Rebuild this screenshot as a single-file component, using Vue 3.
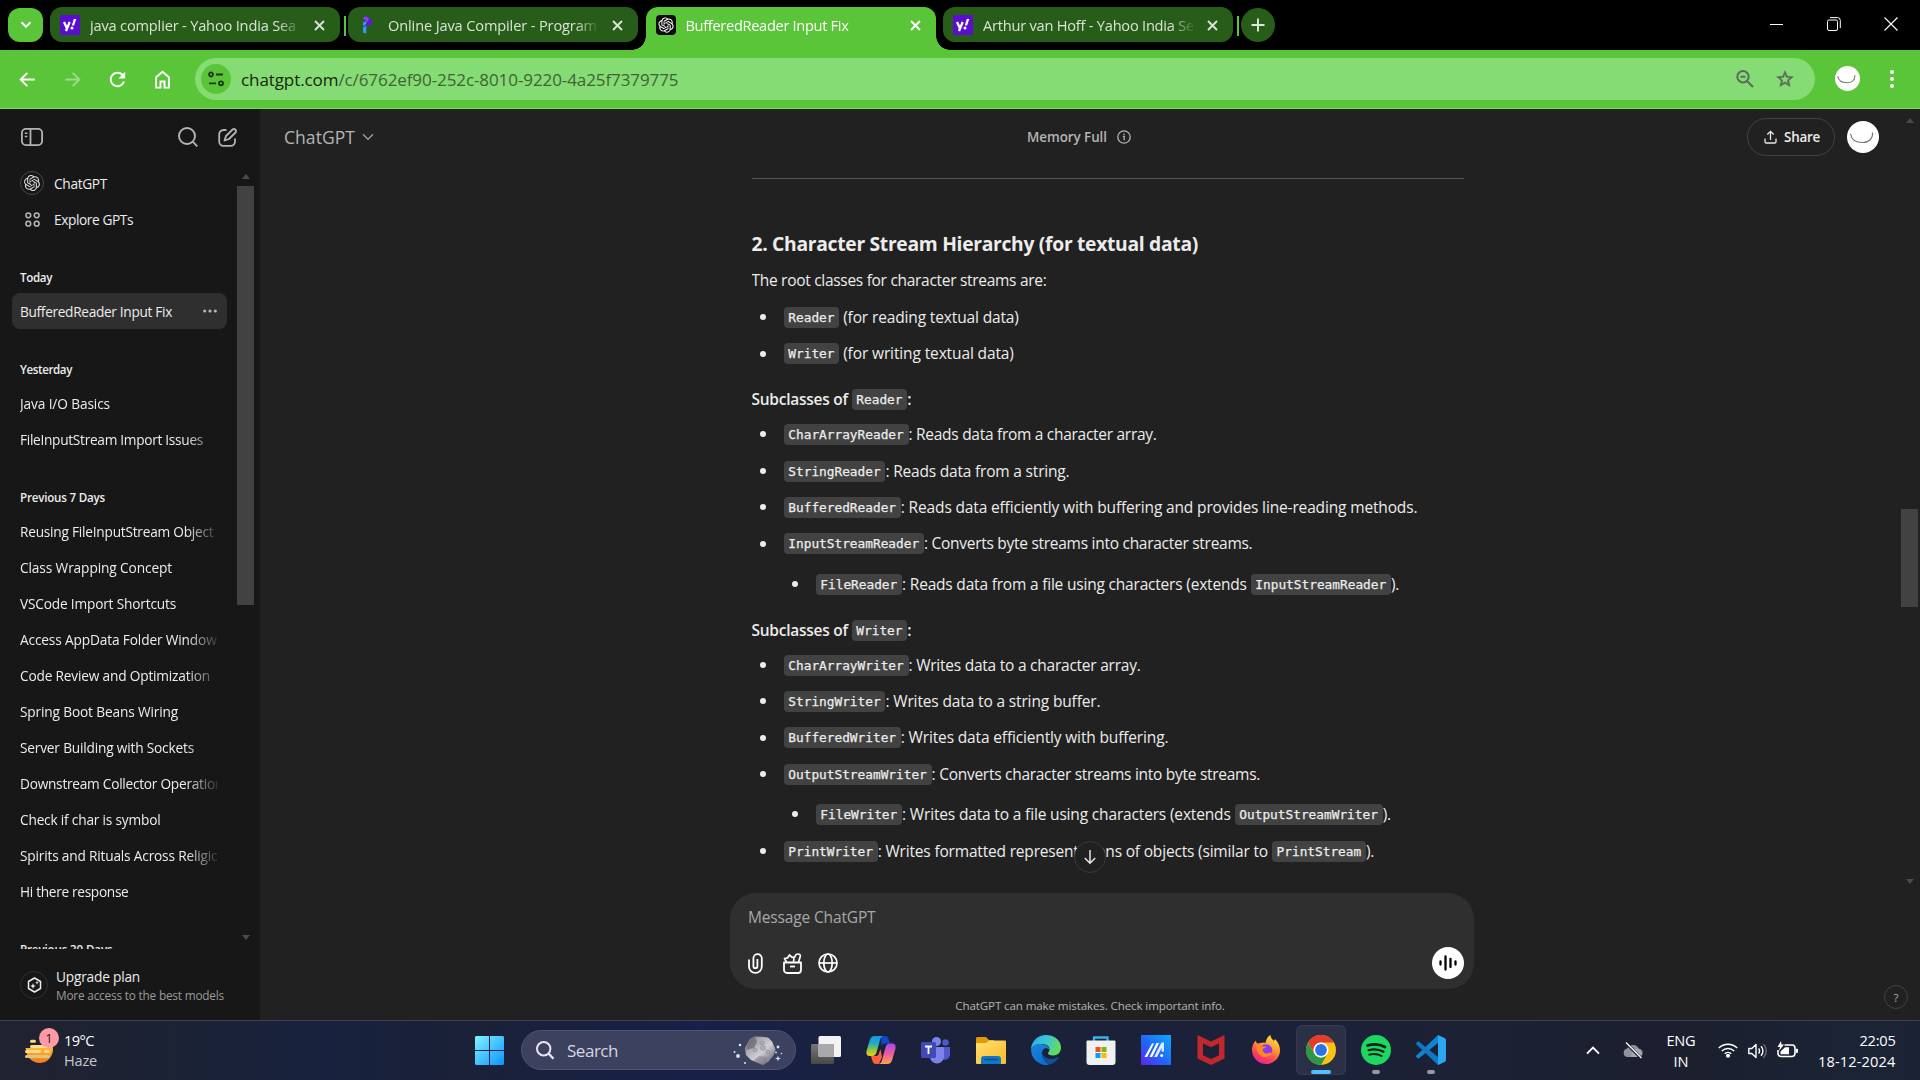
<script setup>
const logo =
  'M22.2819 9.8211a5.9847 5.9847 0 0 0-.5157-4.9108 6.0462 6.0462 0 0 0-6.5098-2.9A6.0651 6.0651 0 0 0 4.9807 4.1818a5.9847 5.9847 0 0 0-3.9977 2.9 6.0462 6.0462 0 0 0 .7427 7.0966 5.98 5.98 0 0 0 .511 4.9107 6.051 6.051 0 0 0 6.5146 2.9001A5.9847 5.9847 0 0 0 13.2599 24a6.0557 6.0557 0 0 0 5.7718-4.2058 5.9894 5.9894 0 0 0 3.9977-2.9001 6.0557 6.0557 0 0 0-.7475-7.0729zm-9.022 12.6081a4.4755 4.4755 0 0 1-2.8764-1.0408l.1419-.0804 4.7783-2.7582a.7948.7948 0 0 0 .3927-.6813v-6.7369l2.02 1.1686a.071.071 0 0 1 .038.052v5.5826a4.504 4.504 0 0 1-4.4945 4.4944zm-9.6607-4.1254a4.4708 4.4708 0 0 1-.5346-3.0137l.142.0852 4.783 2.7582a.7712.7712 0 0 0 .7806 0l5.8428-3.3685v2.3324a.0804.0804 0 0 1-.0332.0615L9.74 19.9502a4.4992 4.4992 0 0 1-6.1408-1.6464zM2.3408 7.8956a4.485 4.485 0 0 1 2.3655-1.9728V11.6a.7664.7664 0 0 0 .3879.6765l5.8144 3.3543-2.0201 1.1685a.0757.0757 0 0 1-.071 0l-4.8303-2.7865A4.504 4.504 0 0 1 2.3408 7.872zm16.5963 3.8558L13.1038 8.364 15.1192 7.2a.0757.0757 0 0 1 .071 0l4.8303 2.7913a4.4944 4.4944 0 0 1-.6765 8.1042v-5.6772a.79.79 0 0 0-.407-.667zm2.0107-3.0231l-.142-.0852-4.7735-2.7818a.7759.7759 0 0 0-.7854 0L9.409 9.2297V6.8974a.0662.0662 0 0 1 .0284-.0615l4.8303-2.7866a4.4992 4.4992 0 0 1 6.6802 4.66zM8.3065 12.863l-2.02-1.1638a.0804.0804 0 0 1-.038-.0567V6.0742a4.4992 4.4992 0 0 1 7.3757-3.4537l-.142.0805L8.704 5.459a.7948.7948 0 0 0-.3927.6813zm1.0976-2.3654l2.602-1.4998 2.6069 1.4998v2.9994l-2.5974 1.4997-2.6067-1.4997Z'

// Tracks the letters of a label so that it fills the given width in pixels.
const vFit = {
  mounted(el, { value }) {
    if (!value) return
    const natural = el.getBoundingClientRect().width
    el.style.letterSpacing = (value - natural) / el.textContent.length + 'px'
  },
}

const tabs = [
  { icon: 'yahoo', title: 'java complier - Yahoo India Sea', w: 206 },
  { icon: 'programiz', title: 'Online Java Compiler - Program', w: 209 },
  { icon: 'gpt', title: 'BufferedReader Input Fix', w: 163, active: true },
  { icon: 'yahoo', title: 'Arthur van Hoff - Yahoo India Se', w: 211 },
]

const groups = [
  { label: 'Today', w: 32, chats: [{ t: 'BufferedReader Input Fix', w: 152, active: true }] },
  {
    label: 'Yesterday',
    w: 52,
    chats: [
      { t: 'Java I/O Basics', w: 90 },
      { t: 'FileInputStream Import Issues', w: 183 },
    ],
  },
  {
    label: 'Previous 7 Days',
    w: 85,
    chats: [
      { t: 'Reusing FileInputStream Object', w: 193.5 },
      { t: 'Class Wrapping Concept', w: 152 },
      { t: 'VSCode Import Shortcuts', w: 156 },
      { t: 'Access AppData Folder Windows', w: 203 },
      { t: 'Code Review and Optimization', w: 190 },
      { t: 'Spring Boot Beans Wiring', w: 158 },
      { t: 'Server Building with Sockets', w: 174 },
      { t: 'Downstream Collector Operation', w: 203 },
      { t: 'Check if char is symbol', w: 140.5 },
      { t: 'Spirits and Rituals Across Religio', w: 199 },
      { t: 'Hi there response', w: 108.5 },
    ],
  },
  { label: 'Previous 30 Days', w: 92.5, chats: [] },
]

const sections = [
  {
    items: [
      { code: 'Reader', text: ' (for reading textual data)', w: 179.5 },
      { code: 'Writer', text: ' (for writing textual data)', w: 174.5 },
    ],
  },
  {
    of: 'Reader',
    items: [
      { code: 'CharArrayReader', text: ': Reads data from a character array.', w: 248 },
      { code: 'StringReader', text: ': Reads data from a string.', w: 184 },
      { code: 'BufferedReader', text: ': Reads data efficiently with buffering and provides line-reading methods.', w: 516.5 },
      { code: 'InputStreamReader', text: ': Converts byte streams into character streams.', w: 328.5 },
      { nested: true, code: 'FileReader', text: ': Reads data from a file using characters (extends ', w: 348.5, code2: 'InputStreamReader' },
    ],
  },
  {
    of: 'Writer',
    items: [
      { code: 'CharArrayWriter', text: ': Writes data to a character array.', w: 232 },
      { code: 'StringWriter', text: ': Writes data to a string buffer.', w: 215 },
      { code: 'BufferedWriter', text: ': Writes data efficiently with buffering.', w: 267.5 },
      { code: 'OutputStreamWriter', text: ': Converts character streams into byte streams.', w: 328.5 },
      { nested: true, code: 'FileWriter', text: ': Writes data to a file using characters (extends ', w: 332.5, code2: 'OutputStreamWriter' },
      { code: 'PrintWriter', text: ': Writes formatted representations of objects (similar to ', w: 394, code2: 'PrintStream' },
    ],
  },
]
</script>

<template>
  <div class="screen">
    <!-- Tab strip -->
    <div class="tabstrip">
      <button class="tab-search">
        <svg width="12" height="8" viewBox="0 0 12 8"><path d="M1.5 1.3 6 5.8l4.5-4.5" fill="none" stroke="#fff" stroke-width="2" /></svg>
      </button>
      <template v-for="(tab, i) in tabs" :key="i">
        <div class="tab" :class="{ active: tab.active }">
          <svg v-if="tab.icon === 'yahoo'" width="20" height="20" viewBox="0 0 20 20">
            <rect width="20" height="20" fill="#5b0fce" />
            <path d="M4 7l2.8 6M9.7 7 6 16" stroke="#fff" stroke-width="2.3" fill="none" />
            <path d="M16.3 4h-2.5l-2 6.600h2.300z" fill="#fff" /><circle cx="12" cy="13" r="1.500" fill="#fff" />
          </svg>
          <svg v-else-if="tab.icon === 'programiz'" width="20" height="20" viewBox="0 0 20 20">
            <path d="M5 4c0-2 2-3 4-2l4 2.500c2 1.500 2 4 0 5L7.500 13l-1-3 3.500-2.500z" fill="#5a1ad8" />
            <path d="M5 3.800c0-2 2-3 4-2l2 1.200-1 4z" fill="#8a3cf0" />
            <path d="M5 7.500 8.300 6v3L5 11zM5 12.500l3.300-2V18c-2 .8-3.300.3-3.300-1.500z" fill="#2f9cf4" />
          </svg>
          <svg v-else width="20" height="20" viewBox="0 0 20 20">
            <rect width="20" height="20" rx="4" fill="#0c0c0c" />
            <path :d="logo" fill="#fff" transform="translate(2.4 2.4) scale(.635)" />
          </svg>
          <div class="tab-title"><span v-fit="tab.w">{{ tab.title }}</span></div>
          <svg class="tab-close" width="11" height="11" viewBox="0 0 11 11"><path d="M1 1l9 9M10 1l-9 9" stroke="currentColor" stroke-width="1.900" /></svg>
        </div>
        <i v-if="i === 0 || i === 3" class="tab-sep" />
      </template>
      <button class="new-tab">
        <svg width="14" height="14" viewBox="0 0 14 14"><path d="M7 .5v13M.5 7h13" stroke="#dfe8dc" stroke-width="1.900" /></svg>
      </button>
      <div class="window-controls">
        <svg width="13" height="14" viewBox="0 0 13 14"><path d="M0 7.500h13" stroke="#fff" /></svg>
        <svg width="14" height="14" viewBox="0 0 14 14" fill="none" stroke="#fff"><rect x=".5" y="3" width="10" height="10.500" rx="1.500" /><path d="M3 .6h7.500a2.800 2.800 0 0 1 2.800 2.800V11" /></svg>
        <svg width="14" height="14" viewBox="0 0 14 14"><path d="M.5.500l13 13M13.500.500l-13 13" stroke="#fff" stroke-width="1.100" /></svg>
      </div>
    </div>

    <!-- Toolbar -->
    <div class="toolbar">
      <div class="nav">
        <svg viewBox="0 0 24 24"><path d="M19.500 11H7.300l5.200-5.200L11.100 4.400 3.500 12l7.600 7.600 1.400-1.400L7.300 13h12.200z" fill="#fff" /></svg>
        <svg viewBox="0 0 24 24" class="dim"><path d="M4.500 11h12.200l-5.200-5.200 1.400-1.400 7.600 7.600-7.600 7.600-1.400-1.400 5.200-5.200H4.500z" fill="#fff" /></svg>
        <svg viewBox="0 0 24 24"><path d="M17.650 6.350C16.200 4.900 14.210 4 12 4c-4.420 0-7.990 3.580-7.990 8s3.570 8 7.990 8c3.730 0 6.840-2.550 7.730-6h-2.080c-.82 2.330-3.040 4-5.650 4-3.310 0-6-2.690-6-6s2.690-6 6-6c1.660 0 3.140.690 4.220 1.780L13 11h7V4z" fill="#fff" /></svg>
        <svg viewBox="0 0 24 24"><path d="M5.300 20.500V9.700L12 4l6.700 5.700v10.800h-4.600v-6.500H9.900v6.500z" fill="none" stroke="#fff" stroke-width="2" /></svg>
      </div>
      <div class="omnibox">
        <div class="site-info">
          <svg width="16" height="16" viewBox="0 0 16 16" fill="none" stroke="#20351b" stroke-width="1.800"><circle cx="3" cy="3.500" r="2" /><path d="M8 3.500h7M1 12.300h7" /><circle cx="13" cy="12.300" r="2" /></svg>
        </div>
        <span v-fit="437.5" class="url"><b>chatgpt.com</b>/c/6762ef90-252c-8010-9220-4a25f7379775</span>
        <svg class="zoom" width="18" height="18" viewBox="0 0 18 18" fill="none" stroke="#5c6b58" stroke-width="2"><circle cx="7" cy="6.800" r="5.700" /><path d="M11 11l6 6M4.500 6.800h5" /></svg>
        <svg class="star" width="20" height="20" viewBox="0 0 24 24"><path d="M22 9.240l-7.190-.62L12 2 9.190 8.630 2 9.240l5.460 4.730L5.820 21 12 17.270 18.180 21l-1.630-7.030zM12 15.400l-3.760 2.270 1-4.280-3.320-2.880 4.380-.38L12 6.100l1.710 4.040 4.380.38-3.320 2.880 1 4.280z" fill="#5c6b58" stroke="#5c6b58" stroke-width=".6" /></svg>
      </div>
      <svg class="profile" width="25" height="25" viewBox="0 0 32 32"><circle cx="16" cy="16" r="16" fill="#fff" /><path d="M3.500 13c1 6 6 8.500 12 8.500S26 18 25.500 11.500" fill="none" stroke="#777" stroke-width="1.300" /></svg>
      <svg class="menu" width="4" height="18" viewBox="0 0 4 18" fill="#fff"><circle cx="2" cy="2" r="2" /><circle cx="2" cy="9" r="2" /><circle cx="2" cy="16" r="2" /></svg>
    </div>

    <div class="page">
      <!-- Sidebar -->
      <aside class="sidebar">
        <div class="side-top">
          <svg width="22" height="18" viewBox="0 0 22 18" fill="none" stroke="#b4b4b4" stroke-width="1.800"><rect x=".9" y=".9" width="20.200" height="16.200" rx="4" /><path d="M9.500 1v16" /><path d="M3.800 5.300h2.600M3.800 8.500h2.600" stroke-width="1.600" /></svg>
          <svg class="find" width="20" height="20" viewBox="0 0 20 20" fill="none" stroke="#b4b4b4" stroke-width="1.900"><circle cx="9" cy="9" r="8" /><path d="M14.700 14.700l4.600 4.600" /></svg>
          <svg width="19" height="19" viewBox="0 0 19 19" fill="none" stroke="#b4b4b4" stroke-width="1.800"><path d="M8.500 2H5.500A4.300 4.300 0 0 0 1.200 6.300V13.500A4.300 4.300 0 0 0 5.500 17.800H12.700A4.300 4.300 0 0 0 17 13.500V10.500" /><path d="M14.600 1.500a2.100 2.100 0 0 1 2.900 3L11 11l-4.500 1.500L8 8z" stroke-linejoin="round" /></svg>
        </div>
        <div class="side-body">
          <div class="side-list">
            <div class="gpt-row">
              <span class="round"><svg width="16" height="16" viewBox="0 0 24 24"><path :d="logo" fill="#ddd" /></svg></span>
              <span v-fit="53">ChatGPT</span>
            </div>
            <div class="gpt-row">
              <span class="grid4"><svg width="15" height="15" viewBox="0 0 15 15" fill="none" stroke="#b4b4b4" stroke-width="1.500"><circle cx="3.300" cy="3.300" r="2.400" /><circle cx="11.700" cy="3.300" r="2.400" /><circle cx="3.300" cy="11.700" r="2.400" /><circle cx="11.700" cy="11.700" r="2.400" /></svg></span>
              <span v-fit="79">Explore GPTs</span>
            </div>
            <section v-for="g in groups" :key="g.label" class="group">
              <h4><span v-fit="g.w">{{ g.label }}</span></h4>
              <div v-for="c in g.chats" :key="c.t" class="chat" :class="{ active: c.active }">
                <div class="chat-title"><span v-fit="c.w">{{ c.t }}</span></div>
                <svg v-if="c.active" class="dots" width="14" height="4" viewBox="0 0 14 4" fill="#b4b4b4"><circle cx="1.700" cy="2" r="1.600" /><circle cx="7" cy="2" r="1.600" /><circle cx="12.300" cy="2" r="1.600" /></svg>
              </div>
            </section>
          </div>
          <div class="scrollbar side-scroll">
            <i class="up" /><i class="thumb" /><i class="down" />
          </div>
        </div>
        <div class="upgrade">
          <span class="round big">
            <svg width="15" height="16" viewBox="0 0 15 16"><path d="M7.500 1 13.500 4.500v7L7.500 15l-6-3.500v-7z" fill="none" stroke="#eee" stroke-width="1.500" stroke-linejoin="round" /><path d="M6 6l.8 2.200L9 9l-2.200.8L6 12l-.8-2.200L3 9l2.200-.8zM10 3.800l.5 1.500 1.500.5-1.500.5-.5 1.500-.5-1.500L8 5.800l1.500-.5z" fill="#eee" /></svg>
          </span>
          <div class="upgrade-text"><span v-fit="84">Upgrade plan</span><small><span v-fit="168">More access to the best models</span></small></div>
        </div>
      </aside>

      <!-- Conversation -->
      <main class="main">
        <header class="head">
          <div class="model"><span v-fit="71">ChatGPT</span><svg width="12" height="8" viewBox="0 0 12 8"><path d="M1 1.300l5 5 5-5" fill="none" stroke="#9b9b9b" stroke-width="1.400" /></svg></div>
          <div class="memory"><span v-fit="80">Memory Full</span><svg width="14" height="14" viewBox="0 0 14 14" fill="none" stroke="#b4b4b4" stroke-width="1.300"><circle cx="7" cy="7" r="6.200" /><path d="M5.800 6.300h1.400v4M7 3.500v1.400" /></svg></div>
          <div class="share"><svg width="13" height="14" viewBox="0 0 13 14" fill="none" stroke="#e8e8e8" stroke-width="1.300"><path d="M6.500 10V1.500M3.300 4.500l3.200-3.200 3.200 3.200M1 8.500v3.200a1.300 1.300 0 0 0 1.300 1.300h8.400a1.300 1.300 0 0 0 1.300-1.300V8.500" /></svg><span v-fit="36">Share</span></div>
          <svg class="avatar" width="32" height="32" viewBox="0 0 32 32"><circle cx="16" cy="16" r="16" fill="#fff" /><path d="M3.500 13c1 6 6 8.500 12 8.500S26 18 25.500 11.500" fill="none" stroke="#777" stroke-width="1.200" /></svg>
        </header>
        <article class="article">
          <hr />
          <h3><span v-fit="446.5">2. Character Stream Hierarchy (for textual data)</span></h3>
          <p><span v-fit="295">The root classes for character streams are:</span></p>
          <template v-for="(s, i) in sections" :key="i">
            <div v-if="s.of" class="sub"><span v-fit="100">Subclasses of </span><code>{{ s.of }}</code><span>:</span></div>
            <ul>
              <li v-for="it in s.items" :key="it.code" :class="{ nested: it.nested }">
                <i class="bullet" /><code>{{ it.code }}</code><span v-fit="it.w">{{ it.text }}</span>
                <template v-if="it.code2"><code>{{ it.code2 }}</code><span v-fit="8">).</span></template>
              </li>
            </ul>
          </template>
        </article>
        <div class="composer">
          <button class="to-bottom"><svg width="14" height="16" viewBox="0 0 14 16"><path d="M7 1v13M1.800 9 7 14.200 12.200 9" fill="none" stroke="#e8e8e8" stroke-width="1.500" /></svg></button>
          <div class="placeholder"><span v-fit="127.5">Message ChatGPT</span></div>
          <div class="tools">
            <svg width="15" height="21" viewBox="0 0 15 21" fill="none" stroke="#fff" stroke-width="1.800"><path d="M1 6.500v7a6.400 6.400 0 0 0 12.800 0V5.300a4.200 4.200 0 0 0-8.400 0v7.900a2 2 0 0 0 4 0V6" /></svg>
            <svg width="19" height="21" viewBox="0 0 19 21" fill="none" stroke="#fff" stroke-width="1.800" stroke-linejoin="round"><path d="M1 9.500h17v7.500a3 3 0 0 1-3 3H4a3 3 0 0 1-3-3z" /><path d="M7 13.500h5" /><path d="M3.500 9 1.500 5.500 4.700 4.800 6.500 2l2.600 2.300 2-.3L10.500 9M11.500 4.500l1-2.200c.4-1 1.200-1.300 2.500-1.300 1.800 0 2.800 1.200 2.200 2.800L15.500 9" stroke-width="1.700" /></svg>
            <svg width="20" height="20" viewBox="0 0 20 20" fill="none" stroke="#fff" stroke-width="1.700"><circle cx="10" cy="10" r="9" /><ellipse cx="10" cy="10" rx="4.200" ry="9" /><path d="M1 10h18" /></svg>
            <span class="voice"><svg width="20" height="16" viewBox="0 0 20 16" stroke="#000" stroke-width="2.300" stroke-linecap="round"><path d="M2.500 6.500v3M7.500 1.500v13M12.500 4v8M17.500 6.500v3" /></svg></span>
          </div>
        </div>
        <div class="note"><span v-fit="269.5">ChatGPT can make mistakes. Check important info.</span></div>
        <div class="scrollbar main-scroll"><i class="up" /><i class="thumb" /><i class="down" /></div>
        <div class="help"><span>?</span></div>
      </main>
    </div>

    <!-- Taskbar -->
    <footer class="taskbar">
      <div class="weather">
        <svg width="36" height="40" viewBox="0 0 36 40">
          <defs><linearGradient id="sun" x1="0" y1="0" x2="0" y2="1"><stop offset="0" stop-color="#ffb92e" /><stop offset="1" stop-color="#ee7a1c" /></linearGradient></defs>
          <path d="M5.500 21h27.500a13.500 14 0 0 1-27 2z" fill="url(#sun)" />
          <g stroke-width="3" stroke-linecap="round"><path d="M11.500 14.300h3" stroke="#ffdc73" /><path d="M11.500 19.500h20M6.500 24.500h13M25.500 24.500h3" stroke="#ffdc94" /><path d="M6.500 29.500h22" stroke="#e5c27c" /></g>
        </svg>
        <span class="badge">1</span>
        <div class="weather-text"><span v-fit="30">19°C</span><span v-fit="33" class="muted">Haze</span></div>
      </div>
      <div class="apps">
        <svg class="start" width="29" height="29" viewBox="0 0 29 29"><defs><linearGradient id="win" x1="0" y1="0" x2="1" y2="1"><stop offset="0" stop-color="#80f2ff" /><stop offset="1" stop-color="#0a95ff" /></linearGradient></defs><path d="M1 0h13v14H0V1zM15 0h13l1 1v13H15zM0 15h14v14H1l-1-1zM15 15h14v13l-1 1H15z" fill="url(#win)" /></svg>
        <div class="search">
          <svg width="19" height="19" viewBox="0 0 19 19" fill="none" stroke="#e6e6ec" stroke-width="2"><circle cx="7.700" cy="7.700" r="6.700" /><path d="M12.500 12.500l5 5.300" stroke-width="2.400" /></svg>
          <span v-fit="51">Search</span>
          <svg class="moon" width="50" height="32" viewBox="0 0 50 32">
            <defs><linearGradient id="rock" x1="0" y1="0" x2="1" y2="1"><stop offset="0" stop-color="#7f7e86" /><stop offset=".55" stop-color="#cfcfd4" /><stop offset=".8" stop-color="#8b8592" /><stop offset="1" stop-color="#d7a6e8" /></linearGradient></defs>
            <path d="M17 3.500 22 1.500l7 .2 6 .8 4 4 3.500 8-2 6-5 6-5.500 3.500-6-2.500-6-2.500-5-5-1-7z" fill="url(#rock)" />
            <path d="M17 3.500 22 1.500 24 7l-3 6-8 2 .5-4z" fill="#5d5b64" opacity=".6" /><path d="M20 26l6-5 8 1-1 6-3.500 2z" fill="#7d7488" opacity=".5" />
            <g fill="#b5b4bb" stroke="#8e8d95" stroke-width=".8"><ellipse cx="29" cy="8" rx="2.200" ry="1.500" /><circle cx="30" cy="13" r="2.300" /><circle cx="22" cy="15" r="1.700" /><circle cx="35" cy="17" r="1.700" /></g>
            <g fill="#cfeaf5"><circle cx="5" cy="21" r="1.900" /><circle cx="7" cy="10" r="1.300" /><circle cx="1.500" cy="17" r="1" /><circle cx="12" cy="28" r="1" /><circle cx="45" cy="12" r="1.400" /><circle cx="43" cy="17.500" r=".9" /><path d="M45 20.500l.7 2.300 2.300.7-2.300.7-.7 2.300-.7-2.300-2.300-.7 2.300-.7z" /><circle cx="48.500" cy="18.500" r=".8" /></g>
          </svg>
        </div>
        <div class="app">
          <svg width="30" height="30" viewBox="0 0 30 30"><defs><linearGradient id="tv" x1="0" y1="0" x2="0" y2="1"><stop offset="0" stop-color="#777" /><stop offset="1" stop-color="#484848" /></linearGradient></defs><rect x="0" y="9" width="23" height="20" rx="1.500" fill="url(#tv)" /><rect x="7.500" y="1" width="22.500" height="21" rx="1.500" fill="#f3f3f3" /><path d="M7.500 9H23v13H9a1.500 1.500 0 0 1-1.500-1.500z" fill="#a9a9a9" /></svg>
        </div>
        <div class="app">
          <svg width="30" height="30" viewBox="0 0 30 30">
            <defs><linearGradient id="cp1" x1="0" y1="0" x2="0" y2="1"><stop offset="0" stop-color="#1797ea" /><stop offset=".35" stop-color="#1fa9c8" /><stop offset=".7" stop-color="#8dc93c" /><stop offset="1" stop-color="#f6c914" /></linearGradient><linearGradient id="cp2" x1="0" y1="0" x2="0" y2="1"><stop offset="0" stop-color="#a14cf0" /><stop offset=".5" stop-color="#ee5a9a" /><stop offset="1" stop-color="#ffa44a" /></linearGradient></defs>
            <path d="M15 1h4c2 0 3 1 3.500 3L24 8.500h-5c-2 0-3 1-3.500 2.500z" fill="#1546c9" />
            <path d="M13 29h-3c-2 0-3-1-3.500-3L5 21h5c2 0 2.500-1 3-3l1.500-4L16 22z" fill="#ff5e3d" />
            <path d="M8.500 1H17c-2 1-2.500 2-3 4l-3.500 12.500c-.7 2-2 3.500-4 3.500H4c-3 0-4-2-3.500-5L4 4.500C5 2 6.500 1 8.500 1z" fill="url(#cp1)" />
            <path d="M21.500 29H13c2-1 2.500-2 3-4l3.500-12.500C20 10 21.500 8.500 23.500 8.500H26c3 0 4 2 3.500 5L26 25.500c-1 2.500-2.500 3.500-4.500 3.500z" fill="url(#cp2)" />
          </svg>
        </div>
        <div class="app">
          <svg width="30" height="30" viewBox="0 0 30 30"><circle cx="15.500" cy="6.500" r="4.500" fill="#7b83eb" /><circle cx="24.500" cy="7.500" r="3.200" fill="#5059c9" /><path d="M20 12h9v8a5.500 5.500 0 0 1-9 3.500z" fill="#5059c9" /><path d="M9 12h14v9a7 7 0 0 1-14 1z" fill="#7b83eb" /><rect x="0" y="7" width="15" height="16" rx="1.500" fill="#4149b5" /><path d="M4 11.500h7M7.500 11.500V19" stroke="#fff" stroke-width="1.800" /></svg>
        </div>
        <div class="app">
          <svg width="30" height="30" viewBox="0 0 30 30"><defs><linearGradient id="fo" x1="0" y1="0" x2="1" y2="1"><stop offset="0" stop-color="#ffdf70" /><stop offset="1" stop-color="#fdbd28" /></linearGradient></defs><path d="M0 3.500C0 2.500.8 2 1.500 2H10l3 3H18v6H0z" fill="#e09a06" /><path d="M0 8h10l3-2.500h16a1 1 0 0 1 1 1V28a1 1 0 0 1-1 1H1a1 1 0 0 1-1-1z" fill="url(#fo)" /><path d="M5 29v-5a3 3 0 0 1 3-3h14a3 3 0 0 1 3 3v5z" fill="#1177c8" /><path d="M9 24.500h12" stroke="#0a4e8e" stroke-width="1.500" stroke-linecap="round" /></svg>
        </div>
        <div class="app">
          <svg width="30" height="30" viewBox="0 0 30 30">
            <defs><linearGradient id="ed" x1="0" y1="0" x2="1" y2=".4"><stop offset="0" stop-color="#2ea4ea" /><stop offset=".5" stop-color="#3ac3d9" /><stop offset="1" stop-color="#61dc62" /></linearGradient><linearGradient id="ed2" x1="0" y1="0" x2=".5" y2="1"><stop offset="0" stop-color="#1a86dd" /><stop offset="1" stop-color="#0b6fd0" /></linearGradient></defs>
            <path d="M10 14c0 6 5 10.500 11 10 3-.2 5-1.500 6-2 .6-.2 1 .2.600.8A15 15 0 0 1 15 30C10 28 7 19 10 14z" fill="#12509c" />
            <path d="M0 14C.5 6 7 0 15 0c9 0 15 6 15 12.500 0 5-3.500 8-8 8-3.500 0-5-1.200-5-2.300 0-1 1.500-1.500 1.500-4C18.500 10.500 14.500 9 11 9 6 9 1.500 11 0 14z" fill="url(#ed)" />
            <path d="M0 14c1.500-3.500 6-5.500 10-5 5 .3 8.500 2.800 8.500 6-1-1.500-3-2-5-1.500-5 3-3 12 4 16.300-1 .2-2.500.2-3.500.2C6 29 0 23 0 14z" fill="url(#ed2)" />
          </svg>
        </div>
        <div class="app">
          <svg width="30" height="30" viewBox="0 0 30 30"><path d="M8 7V2.500h13.500V7" fill="none" stroke="#33b5ef" stroke-width="2.300" /><path d="M.5 6.500a1 1 0 0 1 1-1h27a1 1 0 0 1 1 1V27a3 3 0 0 1-3 3h-23a3 3 0 0 1-3-3z" fill="#f1f1f1" /><path d="M9.500 12h5v5h-5z" fill="#f25022" /><path d="M15.500 12h5v5h-5z" fill="#7fba00" /><path d="M9.500 18h5v5h-5z" fill="#00a4ef" /><path d="M15.500 18h5v5h-5z" fill="#ffb900" /></svg>
        </div>
        <div class="app">
          <svg width="30" height="30" viewBox="0 0 30 30"><defs><linearGradient id="as" x1="0" y1="1" x2="1" y2="0"><stop offset="0" stop-color="#5b22f5" /><stop offset=".45" stop-color="#2265f7" /><stop offset="1" stop-color="#0ea8ff" /></linearGradient></defs><path d="M0 0h30v30H0z" fill="url(#as)" /><path d="M3.500 22h2.700L13 8.500h-2zM8.500 22h2.700L18 8h-2.500z" fill="#fff" /><path d="M13 22 20.500 7.500h2.500v9h-2.500V13l-4.500 9z" fill="#dfe9ff" /><circle cx="20.700" cy="20.500" r="1.500" fill="#fff" /></svg>
        </div>
        <div class="app">
          <svg width="30" height="30" viewBox="0 0 30 30"><path d="M1.500 0 15 6.500 28.500 0v23.500L15 30 1.500 23.500zM7 8.500v11.700l8 3.800 8-3.800V8.500l-8 3.800z" fill="#c1272d" fill-rule="evenodd" /></svg>
        </div>
        <div class="app">
          <svg width="30" height="30" viewBox="0 0 30 30">
            <defs><linearGradient id="ff" x1=".8" y1="0" x2=".3" y2="1"><stop offset="0" stop-color="#ffe84a" /><stop offset=".4" stop-color="#ff9a2e" /><stop offset=".75" stop-color="#ff3f5c" /><stop offset="1" stop-color="#e0229c" /></linearGradient></defs>
            <path d="M5 5.500c0 1.500.8 2.500 1.500 3L9.500 8c2-1 4-.5 5-.2C15 4 17.500 1 19.500 0c0 3 2 4.500 3.500 6l1-2c3.500 4 5 7 5 11.500C29 23 22.500 29 15 29S1 23 1 15c0-4 2-8 4-9.500z" fill="url(#ff)" />
            <circle cx="15" cy="15.500" r="6.300" fill="#8a3df0" /><path d="M5.500 10c3-.5 4 .5 6 1.500h4c-1 1.500-3 2-4 2.500 0 3 2 5 5 4.500 2-.3 3-1 4.500-.5-1.500 3-5 4.500-8 4C9 21.500 5 17 5.500 10z" fill="#ff8b1f" />
          </svg>
        </div>
        <div class="app current">
          <svg width="30" height="30" viewBox="0 0 30 30"><circle cx="15" cy="15" r="15" fill="#fbc116" /><path d="M2 7.500A15 15 0 0 1 28 7.500H15a7.500 7.500 0 0 0-6.500 11.200z" fill="#e33b2e" /><path d="M2 7.500 8.500 18.800A7.500 7.500 0 0 0 21.500 18.800L15 30A15 15 0 0 1 2 7.500z" fill="#2a9846" /><circle cx="15" cy="15" r="7.500" fill="#fff" /><circle cx="15" cy="15" r="5.900" fill="#2a72e8" /></svg>
          <i class="run wide" />
        </div>
        <div class="app">
          <svg width="30" height="30" viewBox="0 0 30 30"><circle cx="15" cy="15" r="15" fill="#1ed760" /><g fill="none" stroke="#10201a" stroke-linecap="round"><path d="M6.500 10.500c6-1.800 12.500-1.200 17.500 1.500" stroke-width="2.700" /><path d="M7.500 15.300c5-1.500 10.500-1 15 1.500" stroke-width="2.200" /><path d="M8.200 19.700c4.500-1.200 8.800-.8 12.500 1.400" stroke-width="1.800" /></g></svg>
          <i class="run" />
        </div>
        <div class="app">
          <svg width="30" height="30" viewBox="0 0 30 30"><path d="M22 0 28.500 3c1 .5 1.500 1.200 1.500 2v20c0 .8-.5 1.500-1.500 2L22 30z" fill="#2aa7f0" /><path d="M22 0v8L3 23.200c-.5.400-1 .3-1.500 0L.4 22c-.5-.5-.5-1 0-1.500z" fill="#1283cf" /><path d="M22 30v-8L3 6.800c-.5-.4-1-.3-1.500 0L.4 8c-.5.500-.5 1 0 1.500z" fill="#0f78c4" /></svg>
          <i class="run" />
        </div>
      </div>
      <div class="tray">
        <svg class="chev" width="14" height="9" viewBox="0 0 14 9"><path d="M1 7.700l6-6 6 6" fill="none" stroke="#fff" stroke-width="1.900" /></svg>
        <svg class="cloud" width="20" height="17" viewBox="0 0 20 17"><path d="M4.500 15a4.300 4.300 0 0 1-.3-8.500A6.500 6.500 0 0 1 16 7.300 4 4 0 0 1 16 15z" fill="#8f929b" /><path d="M9 8l6-1.500A4 4 0 0 1 16 15H8z" fill="#b5b7bd" opacity=".6" /><path d="M3 1l15.500 15.500" stroke="#1e2232" stroke-width="3" /><path d="M3 .5 18.500 16" stroke="#fff" stroke-width="1.300" /></svg>
        <div class="lang"><span v-fit="29">ENG</span><span v-fit="15">IN</span></div>
        <svg class="wifi" width="20" height="16" viewBox="0 0 20 16" fill="none" stroke="#fff" stroke-width="1.500"><path d="M.8 6a13 13 0 0 1 18.400 0M3.800 9a8.800 8.800 0 0 1 12.400 0M6.700 11.800a4.700 4.700 0 0 1 6.600 0" /><circle cx="10" cy="13.800" r="1.300" fill="#fff" /></svg>
        <svg class="speaker" width="20" height="16" viewBox="0 0 20 16" fill="none" stroke="#fff" stroke-width="1.400"><path d="M.8 5.500h3L8 1.500v13l-4.200-4h-3z" stroke-linejoin="round" /><path d="M10.500 5.500a3.500 3.500 0 0 1 0 5M13 3.300a6.600 6.600 0 0 1 0 9.400" /><path d="M15.500 1.300a9.500 9.500 0 0 1 0 13.400" stroke="#666b78" /></svg>
        <svg class="battery" width="21" height="18" viewBox="0 0 21 18"><path d="M7.500 4h7.500a3 3 0 0 1 3 3v5.500a3 3 0 0 1-3 3H4a3 3 0 0 1-3-3V9" fill="none" stroke="#fff" stroke-width="1.600" /><path d="M3.500 10.500 8 6.300h4v7H3.500z" fill="#fff" /><path d="M19 7.700h1.200a.8.800 0 0 1 .8.800v2.600a.8.800 0 0 1-.8.800H19z" fill="#fff" /><path d="M4 0 .5 6H3L2 10l5-6.500H4.500z" fill="#fff" /></svg>
        <div class="clock"><span v-fit="36">22:05</span><span v-fit="77.500">18-12-2024</span></div>
      </div>
    </footer>
  </div>
</template>

<style>
body { margin: 0; background: #212121; overflow: hidden; }
</style>

<style scoped>
.screen { width: 1920px; height: 1080px; display: flex; flex-direction: column; overflow: hidden; font-family: "Open Sans", "Noto Sans", sans-serif; color: #ececec; }
.screen * { box-sizing: border-box; }
span { white-space: pre; }
svg { display: block; flex: none; }
button { border: 0; padding: 0; display: flex; align-items: center; justify-content: center; }

.tabstrip { height: 50px; background: #000; display: flex; align-items: flex-start; padding: 7px 22px 0 8px; }
.tab-search { width: 35px; height: 34px; margin: 1px 7px 0 0; border-radius: 12px; background: #5bc53a; }
.tab { position: relative; flex: none; width: 290px; height: 35px; border-radius: 12px; background: #285d19; display: flex; align-items: center; padding: 1px 15px 0 10px; color: #d9e2d6; font-size: 14.600px; margin-right: 7.500px; }
.tab.active { height: 43px; padding-bottom: 8px; background: #5bc53a; color: #fff; border-radius: 12px 12px 0 0; }
.tab.active::before, .tab.active::after { content: ""; position: absolute; bottom: 0; width: 14px; height: 14px; }
.tab.active::before { left: -14px; background: radial-gradient(circle at 0 0, transparent 13.500px, #5bc53a 14px); }
.tab.active::after { right: -14px; background: radial-gradient(circle at 100% 0, transparent 13.500px, #5bc53a 14px); }
.tab-title { flex: 1; margin-left: 10px; overflow: hidden; -webkit-mask-image: linear-gradient(90deg, #000 188px, transparent 212px); mask-image: linear-gradient(90deg, #000 188px, transparent 212px); }
.tab-close { color: currentColor; }
.tab-sep { width: 2px; height: 20px; background: #5bc53a; margin: 9px 2.500px 0 -4px; flex: none; }
.new-tab { width: 34px; height: 34px; margin: 1px 0 0; border-radius: 17px; background: #285d19; }
.window-controls { margin-left: auto; display: flex; gap: 43.500px; padding-top: 10px; }

.toolbar { height: 59px; background: #5bc53a; border-bottom: 1px solid #7ed964; display: flex; align-items: center; padding: 0 26px 0 16px; }
.nav { display: flex; gap: 22px; }
.nav svg { width: 23px; height: 23px; }
.nav .dim { opacity: .4; }
.omnibox { width: 1620px; height: 42px; margin-left: 21px; border-radius: 21px; background: #85db74; display: flex; align-items: center; padding: 0 20px 0 6px; }
.site-info { width: 30px; height: 30px; border-radius: 50%; background: #5bc53a; display: flex; align-items: center; justify-content: center; }
.url { margin-left: 10px; font-size: 17px; color: #3d6433; }
.url b { font-weight: 400; color: #17260f; }
.zoom { margin-left: auto; }
.star { margin-left: 21px; }
.profile { margin: -1px 0 0 20px; }
.menu { margin-left: auto; }

.page { height: 911px; display: flex; }
.sidebar { width: 260px; background: #171717; display: flex; flex-direction: column; }
.side-top { height: 56px; display: flex; align-items: center; padding: 0 23px 0 21px; }
.find { margin-left: auto; margin-right: 20px; }
.side-body { height: 784px; display: flex; overflow: hidden; }
.side-list { width: 227px; padding: 0 0 0 12px; font-size: 13.700px; flex: none; }
.gpt-row { height: 36px; display: flex; align-items: center; padding-left: 8px; gap: 10px; }
.round { width: 24px; height: 24px; border: 1px solid #4a4a4a; border-radius: 50%; display: flex; align-items: center; justify-content: center; flex: none; }
.grid4 { width: 24px; display: flex; justify-content: center; }
.group { margin-top: 20px; padding-top: 5px; }
.group h4 { margin: 0; height: 31px; padding: 7px 0 0 8px; font-size: 11.600px; line-height: 18px; font-weight: 600; }
.gpt-row + .group { margin-top: 26px; padding-top: 0; }
.gpt-row + .group h4 { height: 30px; padding-top: 6px; }
.chat { height: 36px; width: 215px; display: flex; align-items: center; border-radius: 8px; padding: 0 10px 0 8px; }
.chat.active { background: #2f2f2f; }
.chat-title { width: 199px; overflow: hidden; -webkit-mask-image: linear-gradient(90deg, #000 166px, transparent 202px); mask-image: linear-gradient(90deg, #000 166px, transparent 202px); }
.chat.active .chat-title { width: auto; flex: 1; mask-image: none; -webkit-mask-image: none; }
.scrollbar { display: flex; flex-direction: column; align-items: center; width: 17px; }
.scrollbar i { flex: none; }
.up, .down { width: 0; height: 0; border: 4.500px solid transparent; }
.up { border-bottom: 5px solid #4b4b4b; border-top: 0; }
.down { border-top: 5px solid #4b4b4b; border-bottom: 0; }
.thumb { width: 17px; background: #424242; }
.side-scroll { margin-left: 10px; padding-top: 9px; }
.side-scroll .thumb { height: 419px; margin-top: 7px; }
.side-scroll .down { margin-top: 330px; }
.upgrade { height: 71px; padding: 22px 0 0 20px; display: flex; }
.round.big { width: 28px; height: 28px; border-color: #303030; }
.upgrade-text { margin: -4px 0 0 8px; display: flex; flex-direction: column; align-items: flex-start; font-size: 13.700px; line-height: 20px; }
.upgrade-text small { font-size: 11.800px; line-height: 17px; color: #9b9b9b; }

.main { position: relative; width: 1660px; background: #212121; display: flex; flex-direction: column; }
.head { height: 56px; display: flex; align-items: center; padding: 0 41px 0 24px; font-size: 13.400px; font-weight: 600; flex: none; }
.model { display: flex; align-items: center; font-size: 17.500px; font-weight: 500; color: #b4b4b4; width: 743px; gap: 7px; }
.memory { display: flex; align-items: center; gap: 10px; color: #b4b4b4; }
.share { margin-left: auto; width: 88px; height: 38px; border: 1px solid #424242; border-radius: 19px; display: flex; align-items: center; padding-left: 16px; gap: 7px; }
.avatar { margin-left: 12px; }
.article { margin-left: 491.500px; width: 712px; height: 728px; overflow: hidden; font-size: 15.500px; }
.article hr { border: 0; height: 1px; background: #555; margin: 13px 0 46.700px; }
.article h3 { margin: 0; height: 36px; display: flex; align-items: center; font-size: 19.300px; font-weight: 700; }
.article p { margin: 0; height: 37.500px; display: flex; align-items: center; }
.article ul { list-style: none; margin: 0; padding: 0; }
.article li { height: 36.400px; display: flex; align-items: center; padding-left: 32px; position: relative; }
.article li.nested { margin-top: 4px; padding-left: 64px; }
.article li > span, .sub > span { padding-bottom: 1px; }
.bullet { width: 6px; height: 6px; border-radius: 50%; background: #ececec; position: absolute; left: 8px; top: 15px; }
.nested .bullet { left: 40px; }
.sub { margin-top: 11.500px; height: 33px; display: flex; align-items: center; font-weight: 600; }
code { height: 21px; padding: 0 4.800px; border-radius: 4px; background: #424242; font-family: "DejaVu Sans Mono", monospace; font-size: 12.790px; line-height: 22px; font-weight: 400; -webkit-text-stroke: .25px currentColor; }
.composer { position: relative; width: 744px; height: 96px; margin-left: 470px; border-radius: 26px; background: #2f2f2f; padding: 11px 10px 0 18px; }
.to-bottom { position: absolute; left: 344px; top: -52px; width: 32px; height: 32px; border-radius: 50%; border: 1px solid #3a3a3a; background: #212121; }
.placeholder { font-size: 15.500px; line-height: 26px; color: #a8a8a8; }
.tools { display: flex; align-items: center; height: 32px; margin-top: 17px; gap: 18px; }
.tools svg + svg { margin-left: 2px; }
.tools svg:nth-child(3) { margin-left: -2px; }
.voice { margin-left: auto; width: 32px; height: 32px; border-radius: 50%; background: #fff; display: flex; align-items: center; justify-content: center; }
.note { text-align: center; font-size: 11.600px; line-height: 16px; margin-top: 9px; color: #b4b4b4; }
.main-scroll { position: absolute; right: 2px; top: 9px; }
.main-scroll .thumb { height: 98px; margin-top: 386px; }
.main-scroll .down { margin-top: 272px; }
.help { position: absolute; right: 12px; bottom: 11px; width: 24px; height: 24px; border: 1px solid #424242; border-radius: 50%; display: flex; align-items: center; justify-content: center; font-size: 11px; color: #b4b4b4; }

.taskbar { position: relative; height: 60px; border-top: 1px solid #3c414e; background: linear-gradient(90deg, #20222f 0, #1c2335 170px, #18223e 320px, #1a2138 470px, #172149 700px, #1b2139 930px, #1b2138 1300px, #1c2134 1480px, #1b1f2e 1700px, #1b2436 1860px, #1b2333 1920px); display: flex; align-items: flex-start; }
.weather { position: relative; width: 475px; padding: 6px 0 0 20px; display: flex; }
.badge { position: absolute; left: 39px; top: 7px; width: 20px; height: 20px; border-radius: 50%; background: #ff99a4; color: #2b1a1e; font-size: 13px; line-height: 20px; text-align: center; }
.weather-text { margin: 3px 0 0 8px; display: flex; flex-direction: column; align-items: flex-start; font-size: 14.600px; line-height: 20px; color: #fff; }
.muted { color: #c5c7cd; }
.apps { display: flex; align-items: flex-start; }
.start { margin-top: 15px; }
.search { width: 275px; height: 40px; margin: 9px 2px 0 17px; border-radius: 20px; background: #3c4160; border: 1px solid #4d5270; display: flex; align-items: center; padding: 0 12px 0 14px; font-size: 17px; color: #d6d7df; gap: 12px; }
.moon { margin-left: auto; margin-top: 2px; }
.app { position: relative; width: 50px; height: 50px; margin: 4px 2.500px 0; border-radius: 6px; display: flex; align-items: center; justify-content: center; }
.current { background: #2b3046; box-shadow: inset 0 0 0 1px #353a4f; }
.run { position: absolute; bottom: 1px; left: 21px; width: 8px; height: 4px; border-radius: 2px; background: #9598a3; }
.run.wide { left: 15px; width: 20px; background: #4cc2ff; }
.tray { margin-left: auto; padding-right: 24.500px; display: flex; align-items: center; height: 59px; font-size: 14.600px; line-height: 20.500px; color: #fff; }
.cloud { margin-left: 23px; }
.lang { margin-left: 23px; width: 30px; display: flex; flex-direction: column; align-items: center; }
.wifi { margin-left: 21.500px; margin-top: -1px; }
.speaker { margin-left: 10px; }
.battery { margin-left: 9px; margin-top: -2px; }
.clock { margin-left: 20.500px; display: flex; flex-direction: column; align-items: flex-end; }
</style>
